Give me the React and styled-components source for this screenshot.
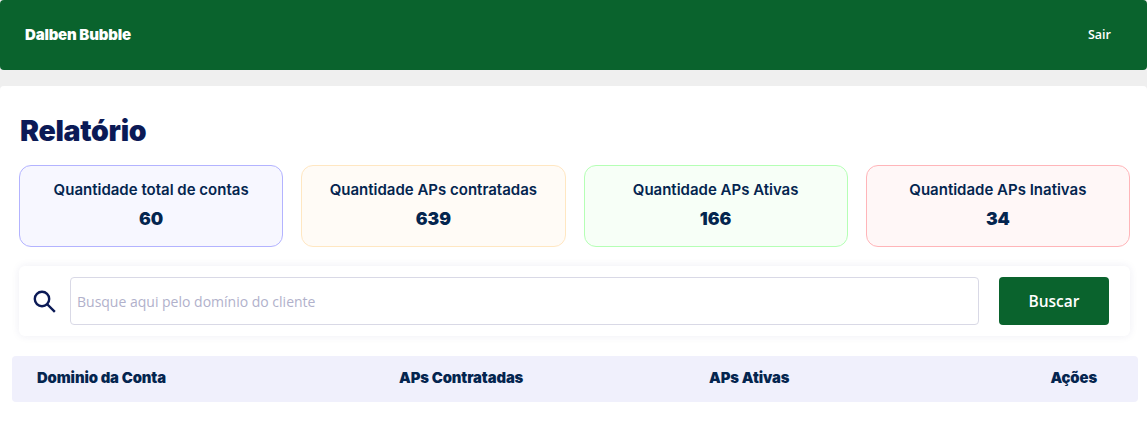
import React from "react";
import styled, { createGlobalStyle } from "styled-components";

const Global = createGlobalStyle`
  html, body { margin: 0; padding: 0; background: #efefef; }
  body { font-family: "Inter", "Liberation Sans", sans-serif; }
`;

const Page = styled.div`
  height: 422px;
  overflow: hidden;
  display: flex;
  flex-direction: column;
  gap: 16px;
`;

const Header = styled.header`
  height: 70px;
  flex: none;
  box-sizing: border-box;
  background: #0a632d;
  border-radius: 4px;
  display: flex;
  align-items: center;
  justify-content: space-between;
  padding: 0 36px 2px 25px;
`;

const Brand = styled.div`
  color: #fff;
  font-size: 15px;
  font-weight: 900;
  letter-spacing: -0.2px;
`;

const Logout = styled.a`
  color: #fff;
  font-family: "Open Sans", sans-serif;
  font-size: 12.5px;
  font-weight: 600;
`;

const Panel = styled.main`
  flex: 1;
  background: #fff;
  border-radius: 4px 4px 0 0;
  padding: 26px 9px 0 12px;
`;

const Title = styled.h1`
  margin: 0 0 15px 8px;
  color: #0b1a56;
  font-size: 28.5px;
  line-height: 38px;
  font-weight: 900;
  letter-spacing: -0.3px;
`;

const Cards = styled.section`
  display: grid;
  grid-template-columns: repeat(4, 1fr);
  gap: 18px;
  margin: 0 8px 19px 7px;
`;

const Card = styled.div`
  height: 82px;
  box-sizing: border-box;
  border: 1px solid ${p => p.$border};
  background: ${p => p.$bg};
  border-radius: 12px;
  display: flex;
  flex-direction: column;
  align-items: center;
  padding-top: 14px;
  color: #04254f;
`;

const CardLabel = styled.div`
  font-size: 15px;
  line-height: 20px;
  font-weight: 600;
`;

const CardValue = styled.div`
  margin-top: 7px;
  font-size: 17.5px;
  line-height: 24px;
  font-weight: 900;
`;

const SearchBar = styled.section`
  height: 70px;
  box-sizing: border-box;
  margin: 0 8px 20px 7px;
  background: #fff;
  border-radius: 6px;
  box-shadow: 0 0 8px rgba(40, 40, 110, 0.08);
  display: flex;
  align-items: center;
  padding: 0 21px 0 13px;
`;

const SearchIcon = styled.svg`
  width: 24px;
  height: 24px;
  flex: none;
  margin-right: 14px;
  color: #0b1a56;
`;

const SearchInput = styled.input`
  flex: 1;
  min-width: 0;
  height: 48px;
  box-sizing: border-box;
  border: 1px solid #d9d9e6;
  border-radius: 4px;
  padding: 0 6px;
  margin-right: 20px;
  font-family: "Open Sans", sans-serif;
  font-size: 14px;
  outline: none;
  &::placeholder { color: #b1b1cb; opacity: 1; }
`;

const SearchButton = styled.button`
  width: 110px;
  height: 48px;
  flex: none;
  border: 0;
  border-radius: 4px;
  background: #0a632d;
  color: #fff;
  font-family: "Open Sans", sans-serif;
  font-size: 15.5px;
  font-weight: 600;
`;

const TableHead = styled.div`
  height: 46px;
  box-sizing: border-box;
  background: #f0f0fc;
  border-radius: 4px;
  display: grid;
  grid-template-columns: 362px 310px 1fr auto;
  align-items: center;
  padding: 0 41px 2px 25px;
  color: #04254f;
  font-size: 14.8px;
  font-weight: 900;
  letter-spacing: -0.1px;
`;

const stats = [
  { label: "Quantidade total de contas", value: 60, border: "#b3b3ff", bg: "#f7f7ff" },
  { label: "Quantidade APs contratadas", value: 639, border: "#ffe7c2", bg: "#fffbf6" },
  { label: "Quantidade APs Ativas", value: 166, border: "#b5ffb5", bg: "#f7fff7" },
  { label: "Quantidade APs Inativas", value: 34, border: "#ffb5b9", bg: "#fff7f7" },
];

export default function App() {
  return (
    <Page>
      <Global />
      <Header>
        <Brand>Dalben Bubble</Brand>
        <Logout>Sair</Logout>
      </Header>
      <Panel>
        <Title>Relatório</Title>
        <Cards>
          {stats.map(s => (
            <Card key={s.label} $border={s.border} $bg={s.bg}>
              <CardLabel>{s.label}</CardLabel>
              <CardValue>{s.value}</CardValue>
            </Card>
          ))}
        </Cards>
        <SearchBar>
          <SearchIcon viewBox="0 0 24 24" fill="none" stroke="currentColor" strokeWidth="2.4" strokeLinecap="square">
            <circle cx="10" cy="10" r="7.2" />
            <path d="M15.5 15.5 L22 22" />
          </SearchIcon>
          <SearchInput placeholder="Busque aqui pelo domínio do cliente" />
          <SearchButton>Buscar</SearchButton>
        </SearchBar>
        <TableHead>
          <div>Dominio da Conta</div>
          <div>APs Contratadas</div>
          <div>APs Ativas</div>
          <div>Ações</div>
        </TableHead>
      </Panel>
    </Page>
  );
}
